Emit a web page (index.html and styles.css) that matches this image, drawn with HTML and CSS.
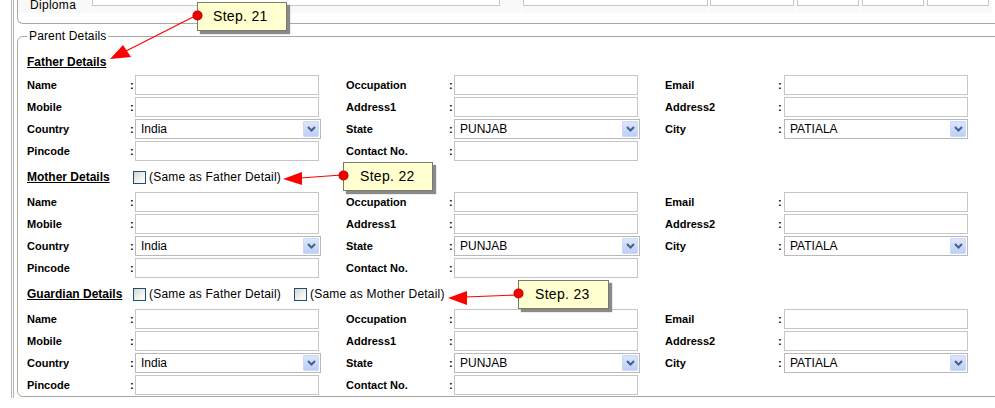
FILE: index.html
```html
<!DOCTYPE html>
<html>
<head>
<meta charset="utf-8">
<link rel="stylesheet" href="styles.css">
</head>
<body>
<div class="page">
  <fieldset class="fs fs-prev">
    <div class="qual-row">
      <div class="qcell qc-label">Diploma</div>
      <div class="qcell qc-1"><span class="qin qi-1"></span></div>
      <div class="qcell qc-2"><span class="qin qi-2"></span></div>
      <div class="qcell qc-3"><span class="qin qi-3"></span></div>
      <div class="qcell qc-4"><span class="qin qi-4"></span></div>
      <div class="qcell qc-5"><span class="qin qi-4"></span></div>
      <div class="qcell qc-6"><span class="qin qi-4"></span></div>
    </div>
  </fieldset>

  <fieldset class="fs fs-parent">
    <legend>Parent Details</legend>

    <section class="sec">
      <div class="sec-head sec-head-first"><span class="sec-title">Father Details</span></div>
      <div class="grid">
        <span class="lbl">Name</span><span class="col">:</span><span class="ctl"><span class="inp"></span></span>
        <span class="lbl">Occupation</span><span class="col">:</span><span class="ctl"><span class="inp"></span></span>
        <span class="lbl">Email</span><span class="col">:</span><span class="ctl"><span class="inp"></span></span>

        <span class="lbl">Mobile</span><span class="col">:</span><span class="ctl"><span class="inp"></span></span>
        <span class="lbl">Address1</span><span class="col">:</span><span class="ctl"><span class="inp"></span></span>
        <span class="lbl">Address2</span><span class="col">:</span><span class="ctl"><span class="inp"></span></span>

        <span class="lbl">Country</span><span class="col">:</span><span class="ctl"><span class="select"><span class="sel-text">India</span><span class="sel-btn"><svg width="9" height="6" viewBox="0 0 9 6"><path d="M1 1 L4.5 4.5 L8 1" stroke="#4a5f88" stroke-width="2" fill="none"/></svg></span></span></span>
        <span class="lbl">State</span><span class="col">:</span><span class="ctl"><span class="select"><span class="sel-text">PUNJAB</span><span class="sel-btn"><svg width="9" height="6" viewBox="0 0 9 6"><path d="M1 1 L4.5 4.5 L8 1" stroke="#4a5f88" stroke-width="2" fill="none"/></svg></span></span></span>
        <span class="lbl">City</span><span class="col">:</span><span class="ctl"><span class="select"><span class="sel-text">PATIALA</span><span class="sel-btn"><svg width="9" height="6" viewBox="0 0 9 6"><path d="M1 1 L4.5 4.5 L8 1" stroke="#4a5f88" stroke-width="2" fill="none"/></svg></span></span></span>

        <span class="lbl">Pincode</span><span class="col">:</span><span class="ctl"><span class="inp"></span></span>
        <span class="lbl">Contact No.</span><span class="col">:</span><span class="ctl"><span class="inp"></span></span>
      </div>
    </section>

    <section class="sec">
      <div class="sec-head"><span class="sec-title">Mother Details</span><span class="cb"></span><span class="cb-text">(Same as Father Detail)</span></div>
      <div class="grid">
        <span class="lbl">Name</span><span class="col">:</span><span class="ctl"><span class="inp"></span></span>
        <span class="lbl">Occupation</span><span class="col">:</span><span class="ctl"><span class="inp"></span></span>
        <span class="lbl">Email</span><span class="col">:</span><span class="ctl"><span class="inp"></span></span>

        <span class="lbl">Mobile</span><span class="col">:</span><span class="ctl"><span class="inp"></span></span>
        <span class="lbl">Address1</span><span class="col">:</span><span class="ctl"><span class="inp"></span></span>
        <span class="lbl">Address2</span><span class="col">:</span><span class="ctl"><span class="inp"></span></span>

        <span class="lbl">Country</span><span class="col">:</span><span class="ctl"><span class="select"><span class="sel-text">India</span><span class="sel-btn"><svg width="9" height="6" viewBox="0 0 9 6"><path d="M1 1 L4.5 4.5 L8 1" stroke="#4a5f88" stroke-width="2" fill="none"/></svg></span></span></span>
        <span class="lbl">State</span><span class="col">:</span><span class="ctl"><span class="select"><span class="sel-text">PUNJAB</span><span class="sel-btn"><svg width="9" height="6" viewBox="0 0 9 6"><path d="M1 1 L4.5 4.5 L8 1" stroke="#4a5f88" stroke-width="2" fill="none"/></svg></span></span></span>
        <span class="lbl">City</span><span class="col">:</span><span class="ctl"><span class="select"><span class="sel-text">PATIALA</span><span class="sel-btn"><svg width="9" height="6" viewBox="0 0 9 6"><path d="M1 1 L4.5 4.5 L8 1" stroke="#4a5f88" stroke-width="2" fill="none"/></svg></span></span></span>

        <span class="lbl">Pincode</span><span class="col">:</span><span class="ctl"><span class="inp"></span></span>
        <span class="lbl">Contact No.</span><span class="col">:</span><span class="ctl"><span class="inp"></span></span>
      </div>
    </section>

    <section class="sec">
      <div class="sec-head"><span class="sec-title">Guardian Details</span><span class="cb"></span><span class="cb-text">(Same as Father Detail)</span><span class="cb cb-second"></span><span class="cb-text">(Same as Mother Detail)</span></div>
      <div class="grid">
        <span class="lbl">Name</span><span class="col">:</span><span class="ctl"><span class="inp"></span></span>
        <span class="lbl">Occupation</span><span class="col">:</span><span class="ctl"><span class="inp"></span></span>
        <span class="lbl">Email</span><span class="col">:</span><span class="ctl"><span class="inp"></span></span>

        <span class="lbl">Mobile</span><span class="col">:</span><span class="ctl"><span class="inp"></span></span>
        <span class="lbl">Address1</span><span class="col">:</span><span class="ctl"><span class="inp"></span></span>
        <span class="lbl">Address2</span><span class="col">:</span><span class="ctl"><span class="inp"></span></span>

        <span class="lbl">Country</span><span class="col">:</span><span class="ctl"><span class="select"><span class="sel-text">India</span><span class="sel-btn"><svg width="9" height="6" viewBox="0 0 9 6"><path d="M1 1 L4.5 4.5 L8 1" stroke="#4a5f88" stroke-width="2" fill="none"/></svg></span></span></span>
        <span class="lbl">State</span><span class="col">:</span><span class="ctl"><span class="select"><span class="sel-text">PUNJAB</span><span class="sel-btn"><svg width="9" height="6" viewBox="0 0 9 6"><path d="M1 1 L4.5 4.5 L8 1" stroke="#4a5f88" stroke-width="2" fill="none"/></svg></span></span></span>
        <span class="lbl">City</span><span class="col">:</span><span class="ctl"><span class="select"><span class="sel-text">PATIALA</span><span class="sel-btn"><svg width="9" height="6" viewBox="0 0 9 6"><path d="M1 1 L4.5 4.5 L8 1" stroke="#4a5f88" stroke-width="2" fill="none"/></svg></span></span></span>

        <span class="lbl">Pincode</span><span class="col">:</span><span class="ctl"><span class="inp"></span></span>
        <span class="lbl">Contact No.</span><span class="col">:</span><span class="ctl"><span class="inp"></span></span>
      </div>
    </section>
  </fieldset>
</div>

<svg class="arrows" width="995" height="408" viewBox="0 0 995 408">
  <line x1="197" y1="15" x2="126" y2="51" stroke="#ff0000" stroke-width="1.2"/>
  <polygon points="110,59 123,45 131,57" fill="#ff0000"/>
  <line x1="342" y1="175" x2="300" y2="178" stroke="#ff0000" stroke-width="1.2"/>
  <polygon points="283,179 302,172 302,185" fill="#ff0000"/>
  <line x1="516" y1="295" x2="465" y2="297" stroke="#ff0000" stroke-width="1.2"/>
  <polygon points="448,298 467,291 467,305" fill="#ff0000"/>
</svg>

<div class="callout c21"><span class="dot"></span>Step. 21</div>
<div class="callout c22"><span class="dot"></span>Step. 22</div>
<div class="callout c23"><span class="dot"></span>Step. 23</div>
</body>
</html>
```

FILE: styles.css
```css
html, body {
  margin: 0;
  padding: 0;
  overflow: hidden;
  background: #ffffff;
}

body {
  width: 995px;
  height: 408px;
  font-family: "Liberation Sans", Arial, sans-serif;
  font-size: 12px;
  color: #000;
}

.page {
  margin-left: 11px;
  border-left: 3px double #b4b4b4;
  padding-left: 3px;
  height: 408px;
  box-sizing: border-box;
}

.fs {
  margin: 0;
  border: 1px solid #a9a89c;
  width: 1010px;
  box-sizing: border-box;
  min-inline-size: 0;
}

/* previous (cut-off) fieldset */
.fs-prev {
  margin-top: -10px;
  border-top: 0;
  border-radius: 0 0 6px 6px;
  padding: 0 0 10px 0;
}

.qual-row {
  display: flex;
  gap: 1px;
  height: 23px;
}

.qcell {
  background: #f9f9f9;
  height: 23px;
  box-sizing: border-box;
}

.qc-label {
  width: 72px;
  padding: 8px 0 0 12px;
  line-height: 14px;
  letter-spacing: 0.3px;
}
.qc-1 { width: 430px; padding-left: 1px; }
.qc-2 { width: 186px; padding-left: 1px; }
.qc-3 { width: 86px; padding-left: 1px; }
.qc-4 { width: 64px; padding-left: 1px; }
.qc-5 { width: 64px; padding-left: 1px; }
.qc-6 { width: 66px; padding-left: 1px; }

.qin {
  display: block;
  height: 16px;
  background: #fff;
  border: 1px solid #c8c8c8;
  box-sizing: border-box;
}
.qi-1 { width: 408px; }
.qi-2 { width: 185px; }
.qi-3 { width: 84px; }
.qi-4 { width: 62px; }

/* parent fieldset */
.fs-parent {
  margin-top: 5px;
  border-radius: 6px;
  padding: 9px 0 1px 9px;
}

.fs-parent legend {
  padding: 0 2px;
  line-height: 14px;
  font-size: 12px;
  letter-spacing: 0.15px;
}

.sec-head {
  display: flex;
  align-items: center;
  height: 20px;
  margin-top: 6px;
  margin-bottom: 5px;
}

.sec-head-first {
  margin-top: 0;
  margin-bottom: 3px;
}

.sec-title {
  width: 106px;
  font-weight: bold;
  font-size: 12px;
  text-decoration: underline;
  flex: none;
}

.cb {
  width: 13px;
  height: 13px;
  box-sizing: border-box;
  border: 1px solid #1d4f7c;
  background: linear-gradient(135deg, #d6d6cf 0%, #f2f2ee 60%, #ffffff 100%);
  margin-right: 3px;
  flex: none;
}

.cb-second {
  margin-left: 13px;
}

.cb-text {
  font-size: 12px;
  letter-spacing: 0.2px;
}

.grid {
  display: grid;
  grid-template-columns: 103px 5px 211px 103px 5px 211px 113px 6px 184px;
  grid-auto-rows: 20px;
  row-gap: 2px;
  align-items: center;
}

.lbl {
  font-weight: bold;
  font-size: 11px;
  line-height: 20px;
}

.col {
  font-weight: bold;
  font-size: 11px;
  line-height: 20px;
}

.ctl {
  display: flex;
  height: 20px;
}

.inp {
  display: block;
  width: 184px;
  height: 20px;
  box-sizing: border-box;
  border: 1px solid #c6c6c6;
  background: #fff;
}

.select {
  display: flex;
  align-items: center;
  width: 186px;
  height: 20px;
  box-sizing: border-box;
  border: 1px solid #b9b9b9;
  background: #fff;
  padding-right: 1px;
}

.sel-text {
  flex: 1;
  padding-left: 5px;
  font-size: 12px;
  line-height: 16px;
}

.sel-btn {
  width: 16px;
  height: 16px;
  display: flex;
  align-items: center;
  justify-content: center;
  background: linear-gradient(#dce6fd, #bccff7);
  border: 1px solid #cbd8f6;
  box-sizing: border-box;
  border-radius: 1px;
}

/* annotation overlay */
.arrows {
  position: absolute;
  left: 0;
  top: 0;
  pointer-events: none;
}

.callout {
  position: absolute;
  width: 90px;
  height: 29px;
  box-sizing: border-box;
  background: #ffffcf;
  border: 1px solid #7a7a6a;
  box-shadow: 3px 3px 1px #8a8a8a;
  font-size: 14px;
  letter-spacing: 0.3px;
  line-height: 27px;
  padding-left: 15px;
}

.dot {
  position: absolute;
  left: -5px;
  top: 8px;
  width: 9px;
  height: 9px;
  border-radius: 50%;
  background: #ee0000;
  box-shadow: 0 0 0 0.5px #a00000;
}

.c21 { left: 197px; top: 2px; }
.c22 { left: 343px; top: 162px; padding-left: 16px; }
.c23 { left: 518px; top: 280px; width: 91px; padding-left: 16px; }
```
